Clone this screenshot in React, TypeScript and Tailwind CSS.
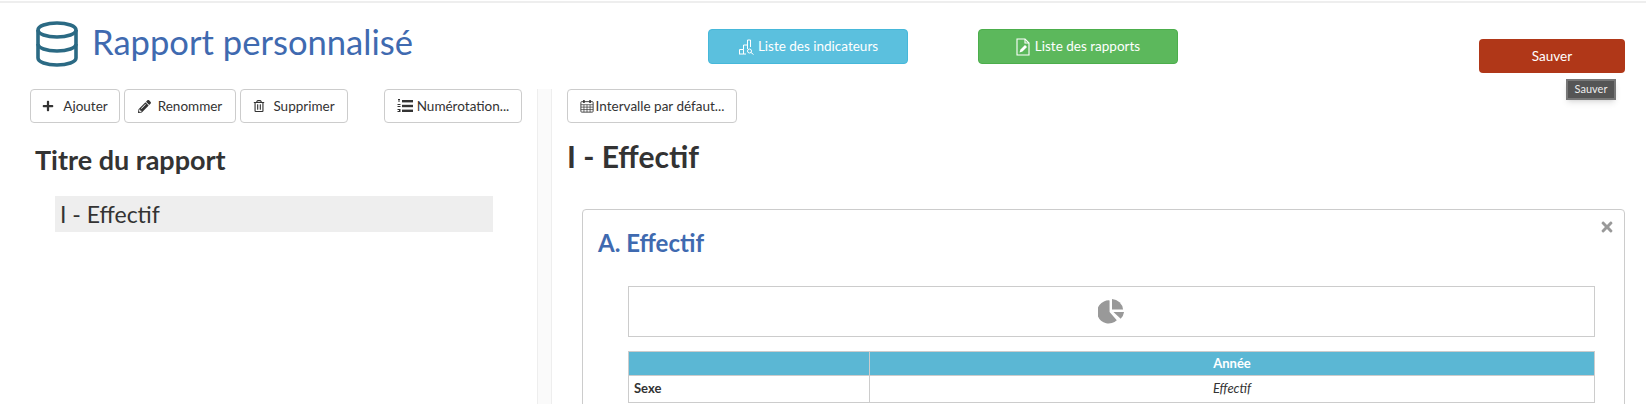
import { FaPencilAlt, FaPlus, FaRegTrashAlt, FaTimes } from "react-icons/fa";

function Database() {
  return (
    <svg viewBox="0 0 42 46" className="w-[42px] h-[46px] text-[#2b6a84]" fill="none" stroke="currentColor" strokeWidth="3.6">
      <ellipse cx="21" cy="9" rx="19" ry="7" />
      <path d="M2 9v28c0 4 8.500 7 19 7s19-3 19-7V9" />
      <path d="M2 23c0 4 8.500 7 19 7s19-3 19-7" />
    </svg>
  );
}

function ChartSearch() {
  return (
    <svg viewBox="0 0 16 16" className="w-4 h-4" fill="none" stroke="currentColor" strokeWidth="1">
      <path d="M1.500 15V10.500h4V15M5.500 10.500V6h4v4M9.500 6V1h3v7" />
      <path d="M1 15h7" />
      <circle cx="11.500" cy="12" r="2" />
      <path d="M13 13.500L15.500 15.500" />
    </svg>
  );
}

function FileEdit() {
  return (
    <svg viewBox="0 0 14 18" className="w-[14px] h-[18px]" fill="none" stroke="currentColor" strokeWidth="1.100">
      <path d="M1 1h8l4 4v12H1z" />
      <path d="M9 1v4h4" />
      <path d="M3.500 14.500l1-3 4.500-4.500 2 2-4.500 4.500z" fill="currentColor" stroke="none" />
    </svg>
  );
}

function NumberedList() {
  return (
    <svg viewBox="0 0 16 16" className="w-4 h-4 mr-[4px]" fill="currentColor">
      <rect x="5" y="2" width="11" height="2.400" />
      <rect x="5" y="6.800" width="11" height="2.400" />
      <rect x="5" y="11.600" width="11" height="2.400" />
      <rect x="1" y="1" width="2" height="1" />
      <rect x="1.500" y="2" width="1" height="2" />
      <rect x="0.500" y="6" width="3" height="1" />
      <rect x="0.500" y="8" width="3" height="1" />
      <rect x="0.500" y="11" width="3" height="1" />
      <rect x="0.500" y="13" width="3" height="1" />
      <rect x="2" y="12" width="1.500" height="1" />
    </svg>
  );
}

function CalendarGrid() {
  return (
    <svg viewBox="0 0 16 16" className="w-[14px] h-[14px] mr-[2px]" fill="none" stroke="currentColor" strokeWidth="1">
      <rect x="1" y="3" width="14" height="12" rx="1" />
      <path d="M1 6.500h14M1 9.300h14M1 12.100h14M4.500 6.500V15M8 6.500V15M11.500 6.500V15" strokeWidth="0.800" />
      <path d="M4.500 1v3.500M11.500 1v3.500" strokeWidth="1.800" />
    </svg>
  );
}

function Pie() {
  return (
    <svg viewBox="0 0 28 28" className="w-[27px] h-[27px] text-[#999]" fill="currentColor">
      <path d="M12 2.500v12l7.500 8.500A12 12 0 1 1 12 2.500z" />
      <path d="M14.500 1a12 12 0 0 1 11.500 11h-11.500z" />
      <path d="M16 14.500h11a12 12 0 0 1-3.500 7z" />
    </svg>
  );
}

function ToolButton({ icon, label, className }: { icon: React.ReactNode; label: string; className: string }) {
  return (
    <button className={`h-[34px] flex items-center justify-center bg-white border border-[#ccc] rounded text-[13.5px] text-[#333] ${className}`}>
      {icon}
      {label}
    </button>
  );
}

export default function App() {
  return (
    <div className="h-[404px] overflow-hidden bg-white font-['Lato','Noto_Sans',sans-serif] text-[#333] border-t-2 border-[#eee] mt-px">
      <header className="h-[86px] flex items-start">
        <div className="w-[674px] flex items-start pl-[36px] pt-[18px] gap-[14px]">
          <Database />
          <h1 className="text-[34.6px] leading-[42px] text-[#3f6ab0] whitespace-nowrap">Rapport personnalisé</h1>
        </div>
        <button className="ml-[34px] mt-[26px] w-[200px] h-[35px] flex items-center justify-center gap-[4px] bg-[#5bc0de] border border-[#46b8da] rounded text-[13.5px] text-white">
          <ChartSearch />
          Liste des indicateurs
        </button>
        <button className="ml-[70px] mt-[26px] w-[200px] h-[35px] flex items-center justify-center gap-[5px] bg-[#5cb85c] border border-[#4cae4c] rounded text-[13.5px] text-white">
          <FileEdit />
          Liste des rapports
        </button>
        <div className="relative ml-[301px] mt-[36px] w-[146px]">
          <button className="w-full h-[34px] bg-[#b03718] rounded text-[13.5px] text-white">Sauver</button>
          <div className="absolute top-[40px] right-[9px] w-[50px] h-[21px] flex items-center justify-center bg-[#555] border-2 border-[#777] shadow-md text-[11px] text-[#eee]">
            Sauver
          </div>
        </div>
      </header>

      <main className="flex">
        <section className="w-[537px] pl-[30px]">
          <div className="flex">
            <ToolButton icon={<FaPlus className="w-[12px] h-[12px] mr-[9px]" />} label="Ajouter" className="w-[90px]" />
            <ToolButton icon={<FaPencilAlt className="w-[13px] h-[13px] mr-[7px]" />} label="Renommer" className="w-[112px] ml-[4px]" />
            <ToolButton icon={<FaRegTrashAlt className="w-[12px] h-[12px] mr-[8px]" />} label="Supprimer" className="w-[108px] ml-[4px]" />
            <ToolButton icon={<NumberedList />} label="Numérotation..." className="w-[138px] ml-[36px]" />
          </div>
          <h2 className="ml-[5px] mt-[19px] text-[27px] leading-[36px] font-bold">Titre du rapport</h2>
          <div className="ml-[25px] mt-[18px] w-[438px] h-[36px] flex items-center pl-[5px] bg-[#eee] text-[23px]">I - Effectif</div>
        </section>

        <div className="w-[15px] h-[320px] bg-[#fafafa] border-x border-[#eee]" />

        <section className="flex-1 min-w-0 pl-[15px] pr-[21px]">
          <ToolButton icon={<CalendarGrid />} label="Intervalle par défaut..." className="w-[170px]" />
          <h2 className="mt-[13px] text-[30px] leading-[40px] font-bold">I - Effectif</h2>
          <article className="relative mt-[33px] ml-[15px] pl-[15px] pr-[29px] pt-[15px] pb-[20px] border border-[#ccc] rounded">
            <FaTimes className="absolute top-[9px] right-[9px] w-[16px] h-[16px] text-[#999]" />
            <h3 className="text-[24px] leading-[36px] font-bold text-[#3f6ab0]">A. Effectif</h3>
            <div className="ml-[30px] mt-[25px] h-[51px] flex items-center justify-center border border-[#ccc]">
              <Pie />
            </div>
            <table className="ml-[30px] mt-[14px] w-[calc(100%-30px)] border-collapse text-[13px]">
              <tbody>
                <tr className="h-[24px] bg-[#5bb7d4] text-white">
                  <th className="w-[241px] border border-[#ccc]" />
                  <th className="border border-[#ccc] font-bold">Année</th>
                </tr>
                <tr className="h-[27px]">
                  <td className="border border-[#ccc] pl-[5px] font-bold">Sexe</td>
                  <td className="border border-[#ccc] text-center italic">Effectif</td>
                </tr>
              </tbody>
            </table>
          </article>
        </section>
      </main>
    </div>
  );
}
